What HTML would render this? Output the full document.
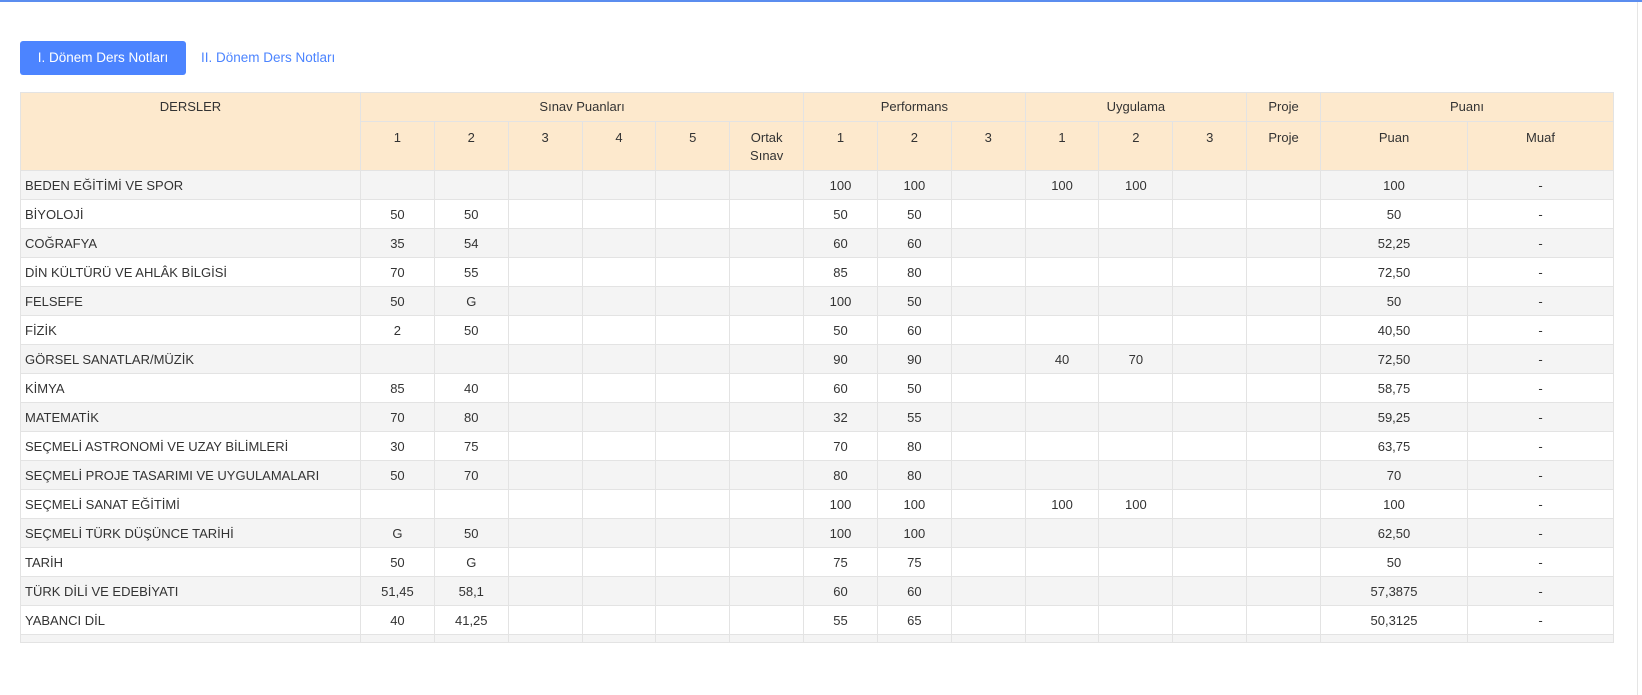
<!DOCTYPE html>
<html><head><meta charset="utf-8"><style>
body{margin:0;background:#fff;font-family:"Liberation Sans",sans-serif;color:#333;font-size:13px;width:1642px;height:695px;overflow:hidden;position:relative}
.top{position:absolute;left:0;top:0;width:1642px;height:2px;background:#5b8def}
.vr{position:absolute;left:1637px;top:2px;width:1px;height:693px;background:#e5e5e5}
.btn{position:absolute;left:20px;top:41px;width:166px;height:34px;background:#4c84ff;border-radius:3px;color:#fff;font-size:13.5px;line-height:34px;text-align:center}
.lnk{position:absolute;left:201px;top:41px;line-height:34px;color:#4c84ff;font-size:13.5px}
table{position:absolute;left:20px;top:92px;border-collapse:collapse;table-layout:fixed;width:1594px}
td,th{border:1px solid #e3e3e3;padding:0;font-weight:normal;text-align:center;vertical-align:middle;height:28px;white-space:nowrap;overflow:hidden}
thead th{background:#fde9cd;vertical-align:top;padding-top:6px;height:22px}
thead tr.r2 th{height:41px;padding-top:7px;line-height:18px}
tbody tr:nth-child(odd) td{background:#f4f4f4}
tbody td:first-child{text-align:left;padding-left:4px}
tr.p td{height:7px;line-height:0;font-size:0}
</style></head><body>
<div class="top"></div><div class="vr"></div>
<div class="btn">I. Dönem Ders Notları</div>
<div class="lnk">II. Dönem Ders Notları</div>
<table>
<colgroup><col style="width:340px"><col span="13" style="width:73.85px"><col style="width:147px"><col style="width:146px"></colgroup>
<thead>
<tr><th rowspan="2" style="height:71px">DERSLER</th><th colspan="6">Sınav Puanları</th><th colspan="3">Performans</th><th colspan="3">Uygulama</th><th>Proje</th><th colspan="2">Puanı</th></tr>
<tr class="r2"><th>1</th><th>2</th><th>3</th><th>4</th><th>5</th><th>Ortak<br>Sınav</th><th>1</th><th>2</th><th>3</th><th>1</th><th>2</th><th>3</th><th>Proje</th><th>Puan</th><th>Muaf</th></tr>
</thead>
<tbody>
<tr><td>BEDEN EĞİTİMİ VE SPOR</td><td></td><td></td><td></td><td></td><td></td><td></td><td>100</td><td>100</td><td></td><td>100</td><td>100</td><td></td><td></td><td>100</td><td>-</td></tr>
<tr><td>BİYOLOJİ</td><td>50</td><td>50</td><td></td><td></td><td></td><td></td><td>50</td><td>50</td><td></td><td></td><td></td><td></td><td></td><td>50</td><td>-</td></tr>
<tr><td>COĞRAFYA</td><td>35</td><td>54</td><td></td><td></td><td></td><td></td><td>60</td><td>60</td><td></td><td></td><td></td><td></td><td></td><td>52,25</td><td>-</td></tr>
<tr><td>DİN KÜLTÜRÜ VE AHLÂK BİLGİSİ</td><td>70</td><td>55</td><td></td><td></td><td></td><td></td><td>85</td><td>80</td><td></td><td></td><td></td><td></td><td></td><td>72,50</td><td>-</td></tr>
<tr><td>FELSEFE</td><td>50</td><td>G</td><td></td><td></td><td></td><td></td><td>100</td><td>50</td><td></td><td></td><td></td><td></td><td></td><td>50</td><td>-</td></tr>
<tr><td>FİZİK</td><td>2</td><td>50</td><td></td><td></td><td></td><td></td><td>50</td><td>60</td><td></td><td></td><td></td><td></td><td></td><td>40,50</td><td>-</td></tr>
<tr><td>GÖRSEL SANATLAR/MÜZİK</td><td></td><td></td><td></td><td></td><td></td><td></td><td>90</td><td>90</td><td></td><td>40</td><td>70</td><td></td><td></td><td>72,50</td><td>-</td></tr>
<tr><td>KİMYA</td><td>85</td><td>40</td><td></td><td></td><td></td><td></td><td>60</td><td>50</td><td></td><td></td><td></td><td></td><td></td><td>58,75</td><td>-</td></tr>
<tr><td>MATEMATİK</td><td>70</td><td>80</td><td></td><td></td><td></td><td></td><td>32</td><td>55</td><td></td><td></td><td></td><td></td><td></td><td>59,25</td><td>-</td></tr>
<tr><td>SEÇMELİ ASTRONOMİ VE UZAY BİLİMLERİ</td><td>30</td><td>75</td><td></td><td></td><td></td><td></td><td>70</td><td>80</td><td></td><td></td><td></td><td></td><td></td><td>63,75</td><td>-</td></tr>
<tr><td>SEÇMELİ PROJE TASARIMI VE UYGULAMALARI</td><td>50</td><td>70</td><td></td><td></td><td></td><td></td><td>80</td><td>80</td><td></td><td></td><td></td><td></td><td></td><td>70</td><td>-</td></tr>
<tr><td>SEÇMELİ SANAT EĞİTİMİ</td><td></td><td></td><td></td><td></td><td></td><td></td><td>100</td><td>100</td><td></td><td>100</td><td>100</td><td></td><td></td><td>100</td><td>-</td></tr>
<tr><td>SEÇMELİ TÜRK DÜŞÜNCE TARİHİ</td><td>G</td><td>50</td><td></td><td></td><td></td><td></td><td>100</td><td>100</td><td></td><td></td><td></td><td></td><td></td><td>62,50</td><td>-</td></tr>
<tr><td>TARİH</td><td>50</td><td>G</td><td></td><td></td><td></td><td></td><td>75</td><td>75</td><td></td><td></td><td></td><td></td><td></td><td>50</td><td>-</td></tr>
<tr><td>TÜRK DİLİ VE EDEBİYATI</td><td>51,45</td><td>58,1</td><td></td><td></td><td></td><td></td><td>60</td><td>60</td><td></td><td></td><td></td><td></td><td></td><td>57,3875</td><td>-</td></tr>
<tr><td>YABANCI DİL</td><td>40</td><td>41,25</td><td></td><td></td><td></td><td></td><td>55</td><td>65</td><td></td><td></td><td></td><td></td><td></td><td>50,3125</td><td>-</td></tr>
<tr class="p"><td></td><td></td><td></td><td></td><td></td><td></td><td></td><td></td><td></td><td></td><td></td><td></td><td></td><td></td><td></td><td></td></tr>
</tbody>
</table>
</body></html>
